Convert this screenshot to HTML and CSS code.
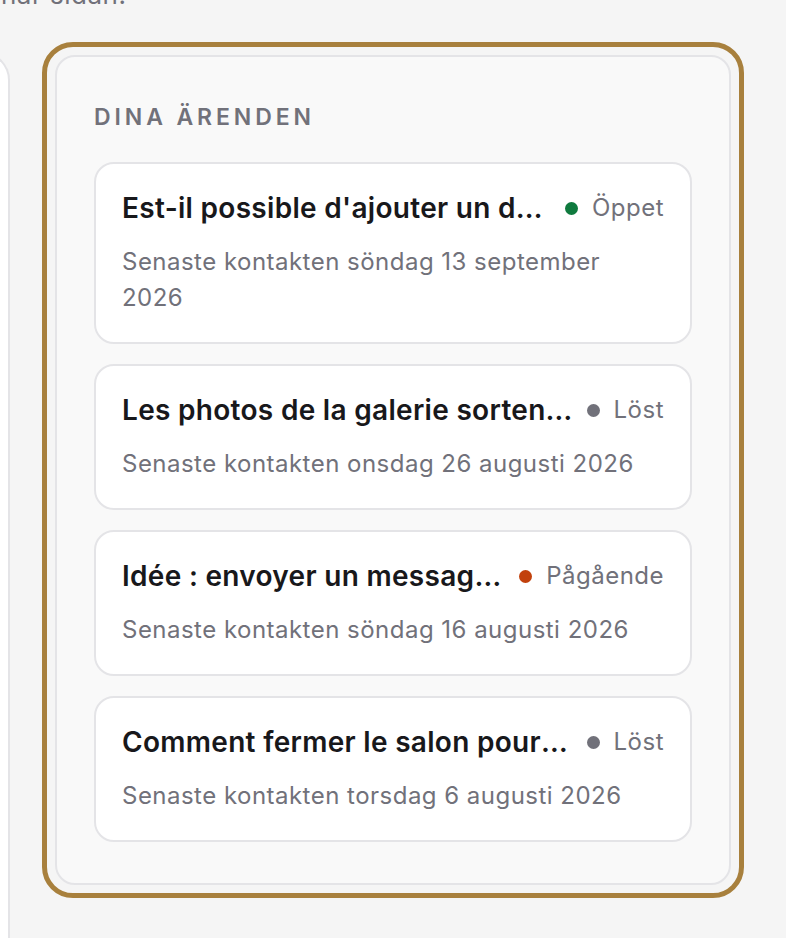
FILE: index.html
```html
<!DOCTYPE html>
<html lang="sv">
<head>
<meta charset="utf-8">
<title>Dina ärenden</title>
<link rel="stylesheet" href="styles.css">
</head>
<body>
<p class="intro">när sidan.</p>
<div class="layout">
  <aside class="side"></aside>
  <div class="highlight">
    <section class="panel">
      <h2 class="panel-title">Dina ärenden</h2>
      <ul class="tickets">
        <li class="ticket">
          <div class="ticket-head">
            <span class="ticket-title">Est-il possible d'ajouter un domaine personnalisé ?</span>
            <span class="status"><span class="dot dot-open"></span>Öppet</span>
          </div>
          <p class="ticket-meta">Senaste kontakten söndag 13 september 2026</p>
        </li>
        <li class="ticket">
          <div class="ticket-head">
            <span class="ticket-title">Les photos de la galerie sortent floues</span>
            <span class="status"><span class="dot dot-solved"></span>Löst</span>
          </div>
          <p class="ticket-meta">Senaste kontakten onsdag 26 augusti 2026</p>
        </li>
        <li class="ticket">
          <div class="ticket-head">
            <span class="ticket-title">Idée : envoyer un message de bienvenue automatique</span>
            <span class="status"><span class="dot dot-progress"></span>Pågående</span>
          </div>
          <p class="ticket-meta">Senaste kontakten söndag 16 augusti 2026</p>
        </li>
        <li class="ticket">
          <div class="ticket-head">
            <span class="ticket-title">Comment fermer le salon pour les vacances ?</span>
            <span class="status"><span class="dot dot-solved"></span>Löst</span>
          </div>
          <p class="ticket-meta">Senaste kontakten torsdag 6 augusti 2026</p>
        </li>
      </ul>
    </section>
  </div>
</div>
</body>
</html>
```

FILE: styles.css
```css
html, body {
  margin: 0;
  padding: 0;
  background: #f5f5f5;
  overflow: hidden;
  font-family: Inter, "Noto Sans", "Liberation Sans", sans-serif;
}

.intro {
  margin: -23px 0 0 1px;
  font-size: 26px;
  line-height: 36px;
  letter-spacing: 0.5px;
  color: #71717a;
}

.layout {
  display: flex;
  align-items: flex-start;
  gap: 32px;
  margin-top: 29px;
}

.side {
  flex: 0 0 60px;
  height: 886px;
  margin-left: -50px;
  margin-top: 10px;
  background: #ffffff;
  border: 2px solid #e4e4e7;
  border-bottom: 0;
  border-radius: 28px 28px 0 0;
  box-sizing: border-box;
}

.highlight {
  width: 702px;
  box-sizing: border-box;
  border: 5px solid #a8803d;
  border-radius: 31px;
  padding: 8px;
}

.panel {
  background: #f9f9f9;
  border: 2px solid #e4e4e7;
  border-radius: 20px;
  padding: 44px 37px 41px;
}

.panel-title {
  margin: 0 0 29px;
  font-size: 23px;
  line-height: 32px;
  font-weight: 600;
  letter-spacing: 3.9px;
  text-transform: uppercase;
  color: #71717a;
}

.tickets {
  list-style: none;
  margin: 0;
  padding: 0;
  display: flex;
  flex-direction: column;
  gap: 20px;
}

.ticket {
  background: #ffffff;
  border: 2px solid #e4e4e7;
  border-radius: 20px;
  padding: 26px;
}

.ticket-head {
  display: flex;
  align-items: center;
  gap: 13px;
}

.ticket-title {
  flex: 1;
  min-width: 0;
  white-space: nowrap;
  overflow: hidden;
  text-overflow: ellipsis;
  font-size: 28px;
  line-height: 36px;
  font-weight: 600;
  letter-spacing: 0.3px;
  color: #18181b;
}

.status {
  flex-shrink: 0;
  display: flex;
  align-items: center;
  gap: 14px;
  font-size: 24px;
  line-height: 36px;
  letter-spacing: 0.5px;
  color: #71717a;
}

.dot {
  width: 13px;
  height: 13px;
  border-radius: 50%;
}

.dot-open { background: #0f7a3e; }
.dot-solved { background: #71717a; }
.dot-progress { background: #c2410c; }

.ticket-meta {
  margin: 18px 0 0;
  font-size: 24px;
  line-height: 36px;
  letter-spacing: 0.48px;
  color: #71717a;
}
```
